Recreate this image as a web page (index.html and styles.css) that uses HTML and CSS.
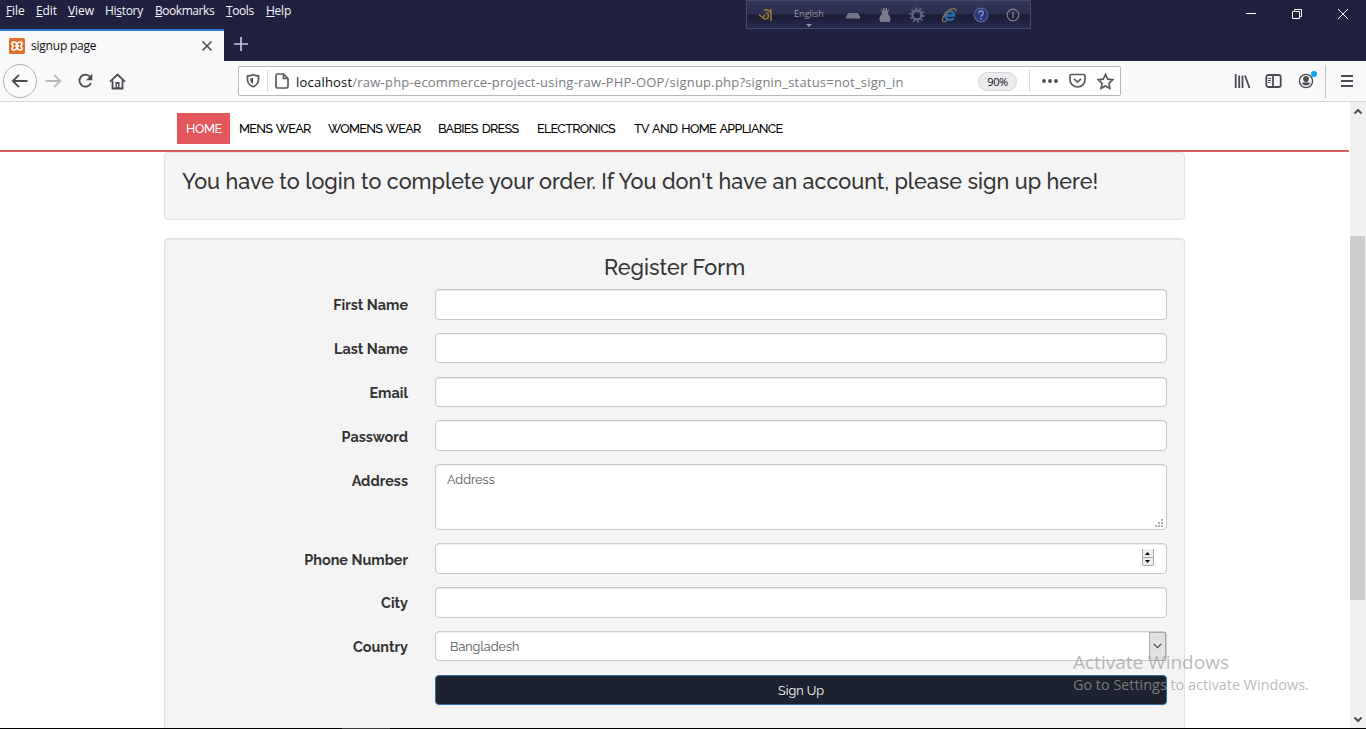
FILE: index.html
```html
<!DOCTYPE html>
<html lang="en">
<head>
<meta charset="utf-8">
<title>signup page</title>
<link rel="stylesheet" href="styles.css">
</head>
<body>
<div class="window">
  <header class="titlebar">
    <nav class="menu">
      <span class="m1"><u>F</u>ile</span><span class="m2"><u>E</u>dit</span><span class="m3"><u>V</u>iew</span><span class="m4">Hi<u>s</u>tory</span><span class="m5"><u>B</u>ookmarks</span><span class="m6"><u>T</u>ools</span><span class="m7"><u>H</u>elp</span>
    </nav>
    <div class="controls">
      <svg width="12" height="12" viewBox="0 0 12 12"><path d="M1 5.500h10"/></svg>
      <svg width="12" height="12" viewBox="0 0 12 12"><path d="M1.500 3.500h7v7h-7zM3.500 3.500v-2h7v7h-2"/></svg>
      <svg width="12" height="12" viewBox="0 0 12 12"><path d="M1 1l10 10M11 1L1 11"/></svg>
    </div>
  </header>
  <div class="tabs">
    <div class="tab">
      <svg class="favicon" width="16" height="16" viewBox="0 0 16 16"><rect width="16" height="16" rx="1.500" fill="#e0702c"/><path d="M8 6.300C7 3.500 3 3.300 3 5.500c0 1.500 1.200 1.700 1.200 2.500S3 9 3 10.500c0 2.200 4 2 5-.8 1 2.800 5 3 5 .8C13 9 11.800 8.800 11.800 8S13 7 13 5.500c0-2.200-4-2-5 .8z" fill="none" stroke="#fff" stroke-width="1.700"/><path d="M6 8h4" stroke="#fff" stroke-width="1.800"/></svg>
      <span>signup page</span>
      <svg class="close" width="12" height="12" viewBox="0 0 12 12"><path d="M1.500 1.500l9 9m0-9l-9 9"/></svg>
    </div>
    <svg class="plus" width="16" height="16" viewBox="0 0 16 16"><path d="M8 1v14M1 8h14"/></svg>
  </div>
  <div class="toolbar">
    <div class="back"><svg width="18" height="16" viewBox="0 0 18 16"><path d="M16.500 8H2M8 1.800L1.800 8 8 14.200"/></svg></div>
    <svg class="forward" width="17" height="16" viewBox="0 0 17 16"><path d="M.5 8H15M9 1.800L15.200 8 9 14.200"/></svg>
    <svg class="reload" width="17" height="16" viewBox="0 0 17 16"><path d="M13.200 4A6 6 0 1 0 14 10"/><path class="solid" d="M15.300.8v6.400H9z"/></svg>
    <svg class="home" width="17" height="17" viewBox="0 0 17 17"><path d="M1 8.700L8.500 1.500 16 8.700M3.500 7.500v8h10v-8"/><path class="solid" d="M6.500 9h4v6h-4z"/><path class="door" d="M8.500 11v3"/></svg>
    <div class="address">
      <svg class="shield" width="14" height="16" viewBox="0 0 14 16"><path d="M7 1.800C5 2.800 3 2.900 1.500 2.900v3.900c0 3.400 1.900 5.500 5.500 7 3.600-1.500 5.500-3.600 5.500-7V2.900C11 2.900 9 2.800 7 1.800z"/><path class="solid" d="M7 4.800c-1 .4-2 .6-2.700.7 0 3.200.6 4.300 2.700 5.500z"/></svg>
      <i class="divider first"></i>
      <svg class="doc" width="14" height="16" viewBox="0 0 14 16"><path d="M2.500 1h6L13 5.500v8q0 1.500-1.500 1.500h-9Q1 15 1 13.500v-11Q1 1 2.500 1zM8.500 1v4.500H13"/></svg>
      <span class="url"><b>localhost</b>/raw-php-ecommerce-project-using-raw-PHP-OOP/signup.php?signin_status=not_sign_in</span>
      <span class="zoom">90%</span>
      <i class="divider"></i>
      <svg class="dots" width="16" height="4" viewBox="0 0 16 4"><g class="solid"><circle cx="2" cy="2" r="1.900"/><circle cx="8" cy="2" r="1.900"/><circle cx="14" cy="2" r="1.900"/></g></svg>
      <svg class="pocket" width="17" height="16" viewBox="0 0 17 16"><path d="M2.500 1.500h12q1.500 0 1.500 1.500v4a7.500 7 0 0 1-15 0V3q0-1.500 1.500-1.500zM5 5.800l3.500 3.300L12 5.800"/></svg>
      <svg class="star" width="17" height="17" viewBox="0 0 17 17"><path d="M8.500 1.500l2.200 4.600 5 .7L12 10.300l.9 5-4.400-2.400-4.400 2.400.9-5L1.300 6.800l5-.7z"/></svg>
    </div>
    <svg class="library" width="17" height="16" viewBox="0 0 17 16"><path d="M1.700 1v14M5.200 2.500V15M8.500 2.500V15M11 2.500L15.500 15"/></svg>
    <svg class="sidebar" width="17" height="16" viewBox="0 0 17 16"><rect x="1.300" y="2" width="14.400" height="12" rx="2"/><path d="M8 2v12"/><path class="thin" d="M3 5.500h3M3 7.500h3M3 9.500h2"/></svg>
    <svg class="account" width="20" height="20" viewBox="0 0 20 20"><circle cx="8" cy="11" r="6.600" class="ring"/><circle cx="8" cy="9" r="2.900" class="solid"/><path class="solid" d="M3.500 13q4.500-1.500 9 0Q8 18 3.500 13z"/><circle cx="16" cy="4" r="3" fill="#00a7f5" stroke="none"/></svg>
    <i class="rule"></i>
    <svg class="burger" width="12" height="12" viewBox="0 0 12 12"><path d="M0 1h12M0 6h12M0 11h12"/></svg>
  </div>

  <div class="viewport">
    <main class="page">
      <nav class="nav">
        <a class="active">HOME</a><a class="n2">MENS WEAR</a><a class="n3">WOMENS WEAR</a><a class="n4">BABIES DRESS</a><a class="n5">ELECTRONICS</a><a class="n6">TV AND HOME APPLIANCE</a>
      </nav>
      <section class="well notice"><h3>You have to login to complete your order. If You don't have an account, please sign up here!</h3></section>
      <section class="well register">
        <h3>Register Form</h3>
        <form>
          <div class="row"><label>First Name</label><div class="field"></div></div>
          <div class="row"><label>Last Name</label><div class="field"></div></div>
          <div class="row"><label>Email</label><div class="field"></div></div>
          <div class="row"><label>Password</label><div class="field"></div></div>
          <div class="row"><label>Address</label><div class="field area"><span>Address</span><svg width="9" height="9" viewBox="0 0 9 9"><path d="M6 0h2v2H6zM3 3h2v2H3zM6 3h2v2H6zM0 6h2v2H0zM3 6h2v2H3zM6 6h2v2H6z" fill="#b0b0b0"/></svg></div></div>
          <div class="row"><label>Phone Number</label><div class="field number"><svg width="12" height="17" viewBox="0 0 12 17"><path fill="#eee" d="M0 0h12v17H0z"/><path fill="none" stroke="#aaa" d="M.5 0v16.500h11V0M.5 8.500h11"/><path d="M3 6l2.500-3L8 6zM3 11h5l-2.500 3z"/></svg></div></div>
          <div class="row"><label>City</label><div class="field"></div></div>
          <div class="row"><label>Country</label><div class="field select"><span>Bangladesh</span><i><svg width="9" height="6" viewBox="0 0 9 6"><path d="M.7.8l3.800 3.800L8.300.8" fill="none" stroke="#444" stroke-width="1.200"/></svg></i></div></div>
          <div class="row"><label></label><button type="button">Sign Up</button></div>
        </form>
      </section>
    </main>
    <aside class="scroll">
      <svg width="10" height="7" viewBox="0 0 10 7"><path d="M1.500 5.500L5 2l3.500 3.500"/></svg>
      <div class="track"><div class="thumb"></div></div>
      <svg width="10" height="7" viewBox="0 0 10 7"><path d="M1.500 1.500L5 5l3.500-3.500"/></svg>
    </aside>
  </div>
  <footer class="taskbar"><i></i></footer>

  <div class="langbar">
    <svg class="bn" width="16" height="16" viewBox="0 0 16 16"><path d="M14 2v12M14 6.500C12 3 9 2.500 7 3.500M9 6c3 0 3.500 5.500 0 6-3 .3-4-2.500-7-4.500M8.500 8.500c-1.500-.5-2.500 1-1 1.800" fill="none" stroke="#95703f" stroke-width="1.700"/></svg>
    <div class="lang"><span>English</span><svg width="6" height="3" viewBox="0 0 6 3"><path d="M0 0h6L3 3z" fill="#9697a4"/></svg></div>
    <svg class="kb" width="16" height="8" viewBox="0 0 16 8"><path d="M3.500 1h9L15 4.500v2H1v-2z" fill="#777a89"/><path d="M3 3h10M2 5h12" stroke="#666978" stroke-dasharray="1 1"/></svg>
    <svg class="mouse" width="12" height="16" viewBox="0 0 12 16"><path d="M2 1l2 3V1h1.500v2.500h1V1H8v3l2-3-1 6c3 3 3 5 1.500 8h-9C0 12 0 10 3 7z" fill="#777b8c"/></svg>
    <svg class="gear" width="16" height="16" viewBox="0 0 16 16"><circle cx="8" cy="8" r="4.500" fill="none" stroke="#616985" stroke-width="2.500"/><circle cx="8" cy="8" r="6.700" fill="none" stroke="#616985" stroke-width="1.800" stroke-dasharray="2 2.210"/></svg>
    <svg class="ie" width="17" height="16" viewBox="0 0 17 16"><path d="M4 8.500h9C13 3 5 3 4.500 8.500c0 5 6.500 5.500 8 2.500" fill="none" stroke="#276da5" stroke-width="2.400"/><path d="M15 4.500C16 0 10 1 6 5S0 14 2.500 14.500 6 13 6 13" fill="none" stroke="#8f763c" stroke-width="1.200"/></svg>
    <svg class="help" width="16" height="16" viewBox="0 0 16 16"><circle cx="8" cy="8" r="6.800" fill="#27377c" stroke="#5b6291" stroke-width="1.200"/><path d="M5.800 6.300c0-3 4.500-3 4.500-.3C10.300 8 8 7.700 8 10M8 11v1.500" fill="none" stroke="#8f98c1" stroke-width="1.400"/></svg>
    <svg class="info" width="14" height="14" viewBox="0 0 14 14"><circle cx="7" cy="7" r="5.800" fill="none" stroke="#858693" stroke-width="1.200"/><path d="M7 4v6" stroke="#858693" stroke-width="1.400"/></svg>
  </div>
  <div class="watermark"><p class="w1">Activate Windows</p><p class="w2">Go to Settings to activate Windows.</p></div>
</div>
</body>
</html>
```
FILE: styles.css
```css
* { box-sizing: border-box; }
body { margin: 0; overflow: hidden; font-family: "Open Sans", sans-serif; }
svg { display: block; flex: none; }
i { display: block; flex: none; }
.window { position: relative; display: flex; flex-direction: column; width: 1366px; height: 729px; background: #fff; }

.titlebar { display: flex; justify-content: space-between; height: 29px; background: #20213f; color: #f5f5fa; }
.menu { display: flex; gap: 12px; padding-left: 6px; font-size: 12px; line-height: 21px; letter-spacing: -.1px; }
.menu span { white-space: nowrap; }
.menu u { text-underline-offset: 1px; text-decoration-thickness: 1px; }
.m1 { width: 18px; } .m2 { width: 20px; } .m3 { width: 25px; } .m4 { width: 38px; letter-spacing: -.3px; }
.m5 { width: 59px; letter-spacing: -.45px; } .m6 { width: 28px; letter-spacing: -.4px; } .m7 { width: 26px; letter-spacing: -.25px; }
.controls { display: flex; gap: 34px; padding: 8px 17px 0 0; }
.controls svg { fill: none; stroke: #fff; stroke-width: 1; }

.tabs { display: flex; height: 32px; background: #20213f; }
.tab { display: flex; align-items: center; width: 224px; padding: 0 11px 0 9px; background: #f9f9fb; border-top: 2px solid #2f78d0; color: #0c0c0d; font-size: 12px; }
.tab span { margin-left: 6px; padding-bottom: 2px; letter-spacing: -.22px; }
.close { margin-left: auto; stroke: #4a4a4f; stroke-width: 1.5; }
.plus { margin: 7px 0 0 9px; stroke: #c5c5d8; stroke-width: 1.7; }

.toolbar { display: flex; align-items: center; height: 41px; background: #f9f9fb; border-bottom: 1px solid #d8d8db; }
.toolbar svg { fill: none; stroke: #4c4c50; stroke-width: 1.8; }
.toolbar .solid { fill: #4c4c50; stroke: none; }
.toolbar .thin { stroke-width: 1; }
.toolbar .ring { stroke-width: 1.4; }
.back { display: flex; align-items: center; justify-content: center; width: 34px; height: 34px; margin-left: 3px; border: 1px solid #b1b1b3; border-radius: 50%; background: #fbfbfc; }
.toolbar .forward { margin-left: 8px; stroke: #b9b9bc; }
.reload { margin-left: 15px; }
.home { margin-left: 15px; }
.toolbar .door { stroke: #f9f9fb; stroke-width: 1.2; }
.address { display: flex; align-items: center; width: 883px; height: 30px; margin-left: 112px; padding-left: 7px; background: #fff; border: 1px solid #b8b8bc; border-radius: 2px; }
.address svg { stroke: #5a5a5e; stroke-width: 1.7; }
.divider { width: 1px; height: 22px; background: #dcdcdf; }
.first { margin: 0 7px 0 7px; }
.url { width: 682px; margin-left: 7px; padding-top: 1px; color: #7b7b7f; font-size: 13px; letter-spacing: .21px; white-space: nowrap; }
.url b { color: #0c0c0d; font-weight: 400; }
.zoom { width: 39px; height: 19px; margin-right: 12px; border: 1px solid #d5d5d8; border-radius: 10px; background: #ededf0; color: #0c0c0d; font-size: 11px; line-height: 18px; letter-spacing: -.4px; text-align: center; }
.dots { margin-left: 12px; }
.pocket { margin-left: 11px; }
.star { margin-left: 11px; }
.library { margin-left: 113px; }
.sidebar { margin-left: 14px; }
.account { margin: -3px 0 0 16px; }
.rule { width: 1px; height: 33px; margin-left: 7px; background: #c0c0c3; }
.toolbar .burger { margin-left: 15px; stroke-width: 2; }

.viewport { display: flex; height: 626px; overflow: hidden; }
.page { width: 1350px; font-family: Raleway, Lato, sans-serif; color: #333; }
.nav { display: flex; width: 1349px; height: 50px; padding: 11px 0 0 177px; border-bottom: 2px solid #d9605f; }
.nav a { height: 31px; padding: 0 0 0 9px; color: #000; font-size: 12.600px; font-weight: 500; line-height: 31px; letter-spacing: -.69px; word-spacing: 1.500px; white-space: nowrap; }
.nav .active { width: 53px; background: #e2585c; color: #fff; letter-spacing: -.4px; }
.n2 { width: 89px; } .n3 { width: 110px; } .n4 { width: 99px; } .n5 { width: 97px; }
.well { width: 1021px; margin-left: 164px; border: 1px solid #e1e1e1; border-radius: 4px; background: #f4f4f4; }
.well h3 { margin: 0; font-size: 21.600px; font-weight: 500; line-height: 24px; white-space: nowrap; }
.notice { height: 68px; padding: 17px 17px 0; }
.register { height: 500px; margin-top: 18px; padding: 17px 17px 0 17px; box-shadow: inset 0 1px 1px #e4e4e4; }
.register h3 { height: 33px; text-align: center; }
.row { display: flex; justify-content: space-between; margin-bottom: 13.200px; }
.row label { width: 226px; padding-top: 6.400px; font-size: 14.400px; font-weight: 700; line-height: 20px; text-align: right; }
.field { display: flex; width: 732px; height: 30.600px; border: 1px solid #c8c8c8; border-radius: 4px; background: #fff; box-shadow: inset 0 1px 1px #ececec; color: #555; font-size: 12.600px; }
.area { height: 66px; justify-content: space-between; padding: 7px 2px 0 11px; }
.area svg { align-self: flex-end; margin-bottom: 1px; }
.number { justify-content: flex-end; align-items: center; padding: 0 12px 2px 0; }
.select { align-items: center; justify-content: space-between; padding-left: 14px; }
.select i { display: flex; align-items: center; justify-content: center; width: 17px; height: 29px; border: 1px solid #aaa; background: #e1e1e1; }
button { width: 732px; height: 30.600px; padding: 1px 0 0; border: 1px solid #2e6da4; border-radius: 4px; background: #1d232e; color: #fff; font: 12.600px Raleway, Lato, sans-serif; }
.scroll { display: flex; flex-direction: column; align-items: center; width: 16px; padding: 6px 0 5px; background: #f0f0f0; }
.scroll svg { fill: none; stroke: #505050; stroke-width: 2; }
.track { align-self: flex-start; width: 15px; flex: 1; padding-top: 121px; }
.thumb { height: 364px; background: #cdcdcd; }
.taskbar { height: 1px; padding-left: 342px; background: #000; }
.taskbar i { width: 48px; height: 1px; background: #3a3a3a; }

.langbar { position: absolute; left: 746px; top: 0; display: flex; align-items: center; width: 285px; height: 29px; padding-left: 10px; border: 1px solid #46496b; background: linear-gradient(#343858, #2a2d4c 48%, #1b1c33 52%, #252a4d); }
.lang { display: flex; flex-direction: column; align-items: center; gap: 3px; width: 32px; margin: 4px 0 0 20px; color: #9a9ba8; font-size: 9px; line-height: 14px; }
.kb { margin: 3px 0 0 20px; }
.mouse { margin-left: 18px; }
.gear { margin-left: 18px; }
.ie { margin-left: 16px; }
.help { margin-left: 15px; }
.info { margin-left: 17px; }
.watermark { position: absolute; left: 1073px; top: 650px; color: rgba(158,158,158,.72); white-space: nowrap; }
.watermark p { margin: 0; }
.w1 { font-size: 19px; line-height: 24px; }
.w2 { font-size: 14.400px; line-height: 22px; }
```
